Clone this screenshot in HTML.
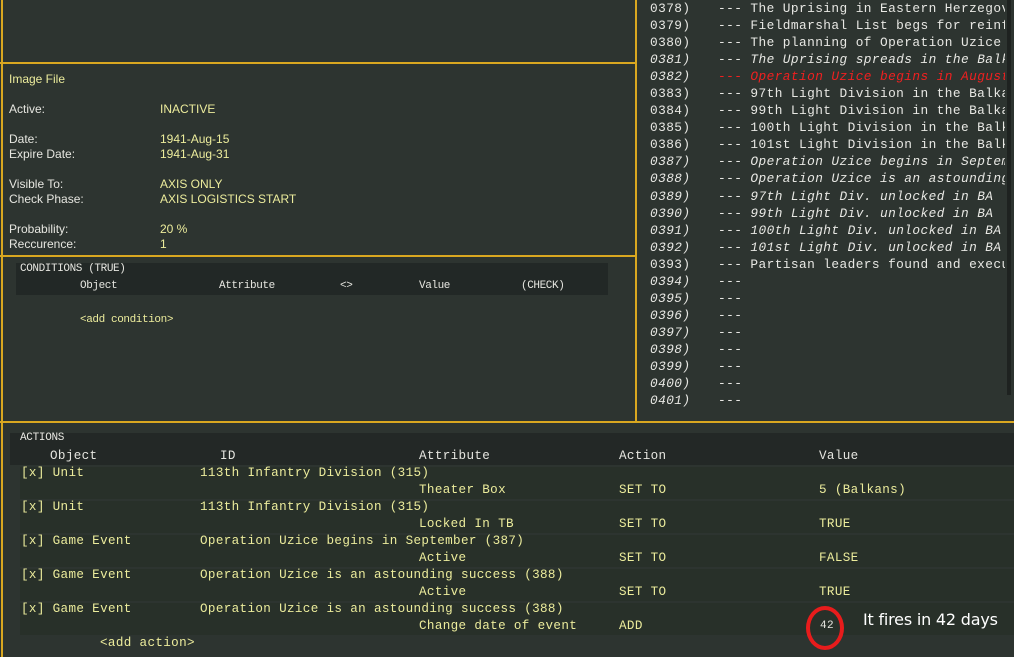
<!DOCTYPE html>
<html><head><meta charset="utf-8"><style>
body{margin:0;width:1014px;height:657px;background:#2d3430;position:relative;overflow:hidden;font-family:"Liberation Mono",monospace;}
.a{position:absolute;white-space:pre;}
.s{font-family:"Liberation Sans",sans-serif;font-size:12px;}
.w{color:#e6e6e0}.y{color:#ecec9c}
.m{font-size:11px;letter-spacing:-0.4px}
.r{font-size:12.8px;color:#e8e8e4;letter-spacing:0.42px;width:355px;overflow:hidden}
.r i{font-style:italic}
.n{display:inline-block;width:68px}
.ac{font-size:12.6px;letter-spacing:0.35px;}
.hl{position:absolute;background:#d9a720;height:2px}
.vl{position:absolute;background:#d9a720;width:2px}
</style></head><body>
<div class="vl" style="left:1px;top:0;height:657px"></div>
<div class="vl" style="left:635px;top:0;height:423px"></div>
<div class="hl" style="left:0;top:62px;width:637px"></div>
<div class="hl" style="left:0;top:255px;width:637px"></div>
<div class="hl" style="left:0;top:421px;width:1014px"></div>

<div class="a s y" style="left:9px;top:72px">Image File</div>
<div class="a s w" style="left:9px;top:102px">Active:</div><div class="a s y" style="left:160px;top:102px">INACTIVE</div>
<div class="a s w" style="left:9px;top:132px">Date:</div><div class="a s y" style="left:160px;top:132px">1941-Aug-15</div>
<div class="a s w" style="left:9px;top:147px">Expire Date:</div><div class="a s y" style="left:160px;top:147px">1941-Aug-31</div>
<div class="a s w" style="left:9px;top:177px">Visible To:</div><div class="a s y" style="left:160px;top:177px">AXIS ONLY</div>
<div class="a s w" style="left:9px;top:192px">Check Phase:</div><div class="a s y" style="left:160px;top:192px">AXIS LOGISTICS START</div>
<div class="a s w" style="left:9px;top:222px">Probability:</div><div class="a s y" style="left:160px;top:222px">20 %</div>
<div class="a s w" style="left:9px;top:237px">Reccurence:</div><div class="a s y" style="left:160px;top:237px">1</div>

<div style="position:absolute;left:16px;top:263px;width:592px;height:32px;background:#222826"></div>
<div class="a m w" style="left:20px;top:263px">CONDITIONS (TRUE)</div>
<div class="a m w" style="left:80px;top:280px">Object</div>
<div class="a m w" style="left:219px;top:280px">Attribute</div>
<div class="a m w" style="left:340px;top:280px">&lt;&gt;</div>
<div class="a m w" style="left:419px;top:280px">Value</div>
<div class="a m w" style="left:521px;top:280px">(CHECK)</div>
<div class="a m y" style="left:80px;top:314px">&lt;add condition&gt;</div>

<div class="a r" style="left:650px;top:0px;line-height:17.05px"><span class="n">0378)</span>--- The Uprising in Eastern Herzegov
<span class="n">0379)</span>--- Fieldmarshal List begs for reinf
<span class="n">0380)</span>--- The planning of Operation Uzice
<span class="n"><i>0381)</i></span>--- <i>The Uprising spreads in the Balk</i>
<span class="n"><i>0382)</i></span><span style="color:#f02020">--- <i>Operation Uzice begins in August</i></span>
<span class="n">0383)</span>--- 97th Light Division in the Balka
<span class="n">0384)</span>--- 99th Light Division in the Balka
<span class="n">0385)</span>--- 100th Light Division in the Balk
<span class="n">0386)</span>--- 101st Light Division in the Balk
<span class="n"><i>0387)</i></span>--- <i>Operation Uzice begins in Septem</i>
<span class="n"><i>0388)</i></span>--- <i>Operation Uzice is an astounding</i>
<span class="n"><i>0389)</i></span>--- <i>97th Light Div. unlocked in BA</i>
<span class="n"><i>0390)</i></span>--- <i>99th Light Div. unlocked in BA</i>
<span class="n"><i>0391)</i></span>--- <i>100th Light Div. unlocked in BA</i>
<span class="n"><i>0392)</i></span>--- <i>101st Light Div. unlocked in BA</i>
<span class="n">0393)</span>--- Partisan leaders found and execu
<span class="n"><i>0394)</i></span>---
<span class="n"><i>0395)</i></span>---
<span class="n"><i>0396)</i></span>---
<span class="n"><i>0397)</i></span>---
<span class="n"><i>0398)</i></span>---
<span class="n"><i>0399)</i></span>---
<span class="n"><i>0400)</i></span>---
<span class="n"><i>0401)</i></span>---</div>
<div style="position:absolute;left:1007px;top:0;width:4px;height:395px;background:#1e2220"></div>

<div style="position:absolute;left:10px;top:433px;width:1004px;height:32px;background:#232826"></div>
<div style="position:absolute;left:20px;top:467px;width:994px;height:32px;background:#283029"></div>
<div style="position:absolute;left:20px;top:501px;width:994px;height:32px;background:#283029"></div>
<div style="position:absolute;left:20px;top:535px;width:994px;height:32px;background:#283029"></div>
<div style="position:absolute;left:20px;top:569px;width:994px;height:32px;background:#283029"></div>
<div style="position:absolute;left:20px;top:603px;width:994px;height:32px;background:#283029"></div>
<div class="a ac w" style="left:20px;top:432px;font-size:11px;letter-spacing:-0.3px">ACTIONS</div>
<div class="a ac w" style="left:50px;top:449px">Object</div>
<div class="a ac w" style="left:220px;top:449px">ID</div>
<div class="a ac w" style="left:419px;top:449px">Attribute</div>
<div class="a ac w" style="left:619px;top:449px">Action</div>
<div class="a ac w" style="left:819px;top:449px">Value</div>

<div class="a ac y" style="left:21px;top:466px">[x] Unit</div><div class="a ac y" style="left:200px;top:466px">113th Infantry Division (315)</div>
<div class="a ac y" style="left:419px;top:483px">Theater Box</div><div class="a ac y" style="left:619px;top:483px">SET TO</div><div class="a ac y" style="left:819px;top:483px">5 (Balkans)</div>
<div class="a ac y" style="left:21px;top:500px">[x] Unit</div><div class="a ac y" style="left:200px;top:500px">113th Infantry Division (315)</div>
<div class="a ac y" style="left:419px;top:517px">Locked In TB</div><div class="a ac y" style="left:619px;top:517px">SET TO</div><div class="a ac y" style="left:819px;top:517px">TRUE</div>
<div class="a ac y" style="left:21px;top:534px">[x] Game Event</div><div class="a ac y" style="left:200px;top:534px">Operation Uzice begins in September (387)</div>
<div class="a ac y" style="left:419px;top:551px">Active</div><div class="a ac y" style="left:619px;top:551px">SET TO</div><div class="a ac y" style="left:819px;top:551px">FALSE</div>
<div class="a ac y" style="left:21px;top:568px">[x] Game Event</div><div class="a ac y" style="left:200px;top:568px">Operation Uzice is an astounding success (388)</div>
<div class="a ac y" style="left:419px;top:585px">Active</div><div class="a ac y" style="left:619px;top:585px">SET TO</div><div class="a ac y" style="left:819px;top:585px">TRUE</div>
<div class="a ac y" style="left:21px;top:602px">[x] Game Event</div><div class="a ac y" style="left:200px;top:602px">Operation Uzice is an astounding success (388)</div>
<div class="a ac y" style="left:419px;top:619px">Change date of event</div><div class="a ac y" style="left:619px;top:619px">ADD</div><div class="a ac w" style="left:820px;top:620px;font-size:11px">42</div>
<div class="a ac y" style="left:100px;top:636px">&lt;add action&gt;</div>
<div style="position:absolute;left:806px;top:606px;width:30px;height:36px;border:4px solid #e81c1c;border-radius:50%"></div>
<div class="a" style="left:863px;top:610px;font-family:'DejaVu Sans',sans-serif;font-size:16px;color:#fff;letter-spacing:-0.2px">It fires in 42 days</div>
</body></html>
